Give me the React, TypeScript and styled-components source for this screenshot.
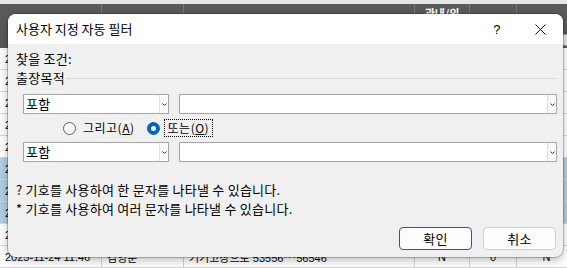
import React from "react";
import styled, { createGlobalStyle } from "styled-components";

const GlobalStyle = createGlobalStyle`
  html, body { margin: 0; padding: 0; }
  body {
    font-family: "Noto Sans CJK KR", "Noto Sans", sans-serif;
    background: #ffffff;
    color: #000;
  }
  * { box-sizing: border-box; }
`;

const Screen = styled.div`
  position: relative;
  width: 567px;
  height: 268px;
  overflow: hidden;
  background: #fff;
`;

const TopStrip = styled.div`
  height: 4px;
  background: #e6e6e6;
`;

const Sheet = styled.div`
  display: grid;
  grid-template-columns: 102px 82px 231px 55px 47px 60px;
  grid-template-rows: 44px repeat(10, 22px);
`;

const HeaderCell = styled.div<{ $top?: boolean }>`
  background: #5a5a5a;
  border-right: 1px solid #767676;
  color: #fff;
  font-weight: 700;
  font-size: 11px;
  line-height: 12px;
  display: flex;
  justify-content: center;
  align-items: ${(p) => (p.$top ? "flex-start" : "center")};
  padding-top: ${(p) => (p.$top ? "3px" : "0")};
  white-space: nowrap;
  overflow: hidden;
`;

const Cell = styled.div<{ $sel?: boolean; $center?: boolean }>`
  display: flex;
  align-items: center;
  justify-content: ${(p) => (p.$center ? "center" : "flex-start")};
  padding: 0 5px;
  border-right: 1px solid #d6d6d6;
  border-bottom: 1px solid #d6d6d6;
  background: ${(p) => (p.$sel ? "#b2cee0" : "#ffffff")};
  font-family: "Liberation Sans", "Noto Sans CJK KR", sans-serif;
  font-size: 11px;
  white-space: nowrap;
  overflow: hidden;
`;

const FilterBtn = styled.div`
  position: absolute;
  left: 561px;
  top: 34px;
  width: 12px;
  height: 12px;
  background: #e9e9e9;
  border: 1px solid #9a9a9a;
`;

/* ---------- dialog ---------- */

const Dialog = styled.div`
  position: absolute;
  left: 8px;
  top: 14px;
  width: 555px;
  height: 243px;
  border-radius: 8px;
  overflow: hidden;
  background: #f0f0f0;
  box-shadow: 0 0 0 1px rgba(0, 0, 0, 0.22), 0 3px 10px rgba(0, 0, 0, 0.28);
  display: flex;
  flex-direction: column;
  font-size: 13px;
  letter-spacing: 0.25px;
`;

const TitleBar = styled.div`
  height: 30px;
  background: #ffffff;
  display: flex;
  align-items: center;
  padding-left: 8px;
`;

const TitleText = styled.div`
  flex: 1;
  font-size: 13px;
  letter-spacing: 0;
  line-height: 16px;
`;

const TitleButton = styled.div<{ $w: number }>`
  width: ${(p) => p.$w}px;
  height: 30px;
  display: flex;
  align-items: center;
  justify-content: center;
  font-family: "Liberation Sans", sans-serif;
  font-size: 13px;
`;

const Body = styled.div`
  flex: 1;
  display: flex;
  flex-direction: column;
  padding: 7px 6px 0 8px;
`;

const Label = styled.div`
  line-height: 15px;
  height: 15px;
  white-space: nowrap;
`;

const GroupRow = styled.div`
  display: flex;
  align-items: center;
  gap: 1px;
  margin-top: 4px;
  height: 15px;
`;

const Divider = styled.div`
  flex: 1;
  height: 1px;
  margin-top: 1px;
  background: #d9d9d9;
`;

const ComboRow = styled.div<{ $mt: number }>`
  display: flex;
  gap: 10px;
  margin-left: 7px;
  margin-top: ${(p) => p.$mt}px;
`;

const Combo = styled.div<{ $w: number }>`
  width: ${(p) => p.$w}px;
  height: 20px;
  border: 1px solid #a6a6a6;
  background: #ffffff;
  display: flex;
`;

const ComboValue = styled.div`
  flex: 1;
  padding-left: 2px;
  line-height: 18px;
`;

const DropButton = styled.div`
  width: 9px;
  border-left: 1px solid #dedede;
  display: flex;
  align-items: center;
  justify-content: center;
`;

const RadioRow = styled.div`
  display: flex;
  align-items: center;
  height: 18px;
  margin-top: 5px;
  padding-left: 47px;
  gap: 12px;
`;

const RadioOption = styled.div`
  display: flex;
  align-items: center;
  gap: 7px;
`;

const RadioCircle = styled.div<{ $on?: boolean }>`
  width: 13px;
  height: 13px;
  border-radius: 50%;
  display: flex;
  align-items: center;
  justify-content: center;
  background: ${(p) => (p.$on ? "#0067c0" : "#f8f8f8")};
  border: 1px solid ${(p) => (p.$on ? "#0067c0" : "#5f5f5f")};
`;

const RadioDot = styled.div`
  width: 5px;
  height: 5px;
  border-radius: 50%;
  background: #ffffff;
`;

const RadioLabel = styled.div<{ $focus?: boolean }>`
  font-size: 12px;
  line-height: 16px;
  padding: 0 ${(p) => (p.$focus ? "3px" : "0")};
  margin-left: ${(p) => (p.$focus ? "-2px" : "0")};
  outline: ${(p) => (p.$focus ? "1px dotted #000" : "none")};
  letter-spacing: 0.5px;
  white-space: nowrap;
  u { text-decoration: underline; text-underline-offset: 1px; }
`;

const Hint = styled.div<{ $mt: number }>`
  margin-top: ${(p) => p.$mt}px;
  line-height: 15px;
  height: 15px;
  white-space: nowrap;
`;

const ButtonRow = styled.div`
  display: flex;
  justify-content: flex-end;
  gap: 11px;
  margin-top: 11px;
  padding-right: 1px;
`;

const Button = styled.div<{ $primary?: boolean }>`
  width: 73px;
  height: 23px;
  border-radius: 4px;
  background: #fdfdfd;
  border: 1px solid ${(p) => (p.$primary ? "#0067c0" : "#d0d0d0")};
  display: flex;
  align-items: center;
  justify-content: center;
`;

const Chevron = () => (
  <svg width="5" height="3" viewBox="0 0 5 3">
    <path d="M0.5 0.5 L2.5 2.5 L4.5 0.5" fill="none" stroke="#333" strokeWidth="1" />
  </svg>
);

const CloseIcon = () => (
  <svg width="11" height="11" viewBox="0 0 11 11">
    <path d="M0.5 0.5 L10.5 10.5 M10.5 0.5 L0.5 10.5" stroke="#111" strokeWidth="1" />
  </svg>
);

const rows = [
  ["2025-11-20 09:12", "박지훈", "현장점검 53556***51230", "N", "0", "N"],
  ["2025-11-20 13:40", "이수진", "회의참석 53556***52211", "Y", "0", "N"],
  ["2025-11-21 10:05", "최민호", "교육참가 53556***53420", "N", "0", "N"],
  ["2025-11-21 15:22", "정하늘", "기기점검 53556***54102", "N", "0", "N"],
  ["2025-11-22 08:47", "김태희", "현장방문 53556***54877", "N", "0", "N"],
  ["2025-11-22 11:30", "오세영", "자재구매 53556***55013", "N", "0", "N"],
  ["2025-11-23 14:18", "한지민", "고객상담 53556***55690", "N", "0", "N"],
  ["2025-11-23 16:55", "유재석", "기기수리 53556***56012", "N", "0", "N"],
  ["2025-11-24 09:03", "강민경", "현장점검 53556***56301", "N", "0", "N"],
  ["2025-11-24 11:46", "김영순", "기기고장으로 53556***56546", "N", "0", "N"],
];

const ComboPair = ({ value }: { value: string }) => (
  <>
    <Combo $w={146}>
      <ComboValue>{value}</ComboValue>
      <DropButton>
        <Chevron />
      </DropButton>
    </Combo>
    <Combo $w={378}>
      <ComboValue />
      <DropButton>
        <Chevron />
      </DropButton>
    </Combo>
  </>
);

export default function App() {
  return (
    <>
      <GlobalStyle />
      <Screen>
        <TopStrip />
        <Sheet>
          <HeaderCell>기안일시</HeaderCell>
          <HeaderCell>신청자</HeaderCell>
          <HeaderCell>출장목적</HeaderCell>
          <HeaderCell $top>관내/외</HeaderCell>
          <HeaderCell>일수</HeaderCell>
          <HeaderCell>숙박</HeaderCell>
          {rows.map((r, i) =>
            r.map((v, j) => (
              <Cell key={`${i}-${j}`} $sel={i >= 5 && i <= 7} $center={j >= 3}>
                {v}
              </Cell>
            ))
          )}
        </Sheet>
        <FilterBtn />

        <Dialog>
          <TitleBar>
            <TitleText>사용자 지정 자동 필터</TitleText>
            <TitleButton $w={40}>?</TitleButton>
            <TitleButton $w={46}>
              <CloseIcon />
            </TitleButton>
          </TitleBar>
          <Body>
            <Label>찾을 조건:</Label>
            <GroupRow>
              <Label>출장목적</Label>
              <Divider />
            </GroupRow>
            <ComboRow $mt={9}>
              <ComboPair value="포함" />
            </ComboRow>
            <RadioRow>
              <RadioOption>
                <RadioCircle />
                <RadioLabel>
                  그리고(<u>A</u>)
                </RadioLabel>
              </RadioOption>
              <RadioOption>
                <RadioCircle $on>
                  <RadioDot />
                </RadioCircle>
                <RadioLabel $focus>
                  또는(<u>O</u>)
                </RadioLabel>
              </RadioOption>
            </RadioRow>
            <ComboRow $mt={5}>
              <ComboPair value="포함" />
            </ComboRow>
            <Hint $mt={20}>? 기호를 사용하여 한 문자를 나타낼 수 있습니다.</Hint>
            <Hint $mt={4}>* 기호를 사용하여 여러 문자를 나타낼 수 있습니다.</Hint>
            <ButtonRow>
              <Button $primary>확인</Button>
              <Button>취소</Button>
            </ButtonRow>
          </Body>
        </Dialog>
      </Screen>
    </>
  );
}
